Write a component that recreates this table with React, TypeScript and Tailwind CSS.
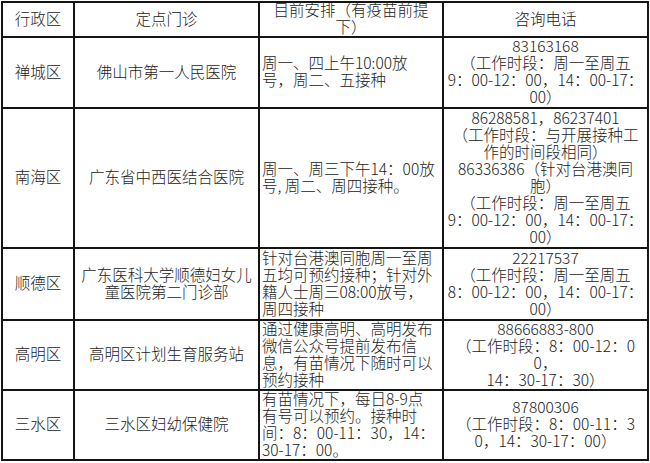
import React from 'react';

type Row = {
    district: string;
    clinic: string[];
    plan: string[];
    phone: string[];
    height: string;
};

const rows: Row[] = [
    {
        district: '禅城区',
        clinic: ['佛山市第一人民医院'],
        plan: ['周一、四上午10:00放', '号，周二、五接种'],
        phone: ['83163168', '（工作时段：周一至周五', '9：00-12：00，14：00-17：', '00）'],
        height: 'h-[71px]',
    },
    {
        district: '南海区',
        clinic: ['广东省中西医结合医院'],
        plan: ['周一、周三下午14：00放', '号, 周二、周四接种。'],
        phone: [
            '86288581，86237401',
            '（工作时段：与开展接种工',
            '作的时间段相同）',
            '86336386（针对台港澳同',
            '胞）',
            '（工作时段：周一至周五',
            '9：00-12：00，14：00-17：',
            '00）',
        ],
        height: 'h-[140px]',
    },
    {
        district: '顺德区',
        clinic: ['广东医科大学顺德妇女儿', '童医院第二门诊部'],
        plan: ['针对台港澳同胞周一至周', '五均可预约接种；针对外', '籍人士周三08:00放号，', '周四接种'],
        phone: ['22217537', '（工作时段：周一至周五', '8：00-12：00，14：00-17：', '00）'],
        height: 'h-[72px]',
    },
    {
        district: '高明区',
        clinic: ['高明区计划生育服务站'],
        plan: ['通过健康高明、高明发布', '微信公众号提前发布信', '息，有苗情况下随时可以', '预约接种'],
        phone: ['88666883-800', '（工作时段：8：00-12：0', '0，', '14：30-17：30）'],
        height: 'h-[70px]',
    },
    {
        district: '三水区',
        clinic: ['三水区妇幼保健院'],
        plan: ['有苗情况下，每日8-9点', '有号可以预约。接种时', '间：8：00-11：30，14：', '30-17：00。'],
        phone: ['87800306', '（工作时段：8：00-11：3', '0，14：30-17：00）'],
        height: 'h-[70px]',
    },
];

// negative top margin lifts the block a bit: the CJK face sits low in its line box
function Lines({ lines }: { lines: string[] }) {
    return (
        <div className="-mt-[3px]">
            {lines.map((l, i) => (
                <div key={i} className="whitespace-nowrap h-[17px]">{l}</div>
            ))}
        </div>
    );
}

const cell = 'border-2 border-[#151515] px-[2px] py-0 align-middle';

export default function App() {
    return (
        <div className="w-[650px] h-[463px] overflow-hidden bg-white pt-[1px] pl-[1px] font-['Noto_Sans_CJK_SC','Noto_Sans',sans-serif] font-light text-[15.5px] leading-[17px] text-[#222]">
            <table className="table-fixed border-collapse">
                <colgroup>
                    <col className="w-[72px]" />
                    <col className="w-[185px]" />
                    <col className="w-[184px]" />
                    <col className="w-[205px]" />
                </colgroup>
                <thead>
                    <tr className="h-[35px]">
                        <th className={`${cell} font-light text-center`}>
                            <Lines lines={['行政区']} />
                        </th>
                        <th className={`${cell} font-light text-center`}>
                            <Lines lines={['定点门诊']} />
                        </th>
                        <th className={`${cell} font-light text-center`}>
                            <Lines lines={['目前安排（有疫苗前提', '下）']} />
                        </th>
                        <th className={`${cell} font-light text-center`}>
                            <Lines lines={['咨询电话']} />
                        </th>
                    </tr>
                </thead>
                <tbody>
                    {rows.map(row => (
                        <tr key={row.district} className={row.height}>
                            <td className={`${cell} text-center`}>
                                <Lines lines={[row.district]} />
                            </td>
                            <td className={`${cell} text-center`}>
                                <Lines lines={row.clinic} />
                            </td>
                            <td className={`${cell} text-left`}>
                                <Lines lines={row.plan} />
                            </td>
                            <td className={`${cell} text-center !px-0`}>
                                <Lines lines={row.phone} />
                            </td>
                        </tr>
                    ))}
                </tbody>
            </table>
        </div>
    );
}
